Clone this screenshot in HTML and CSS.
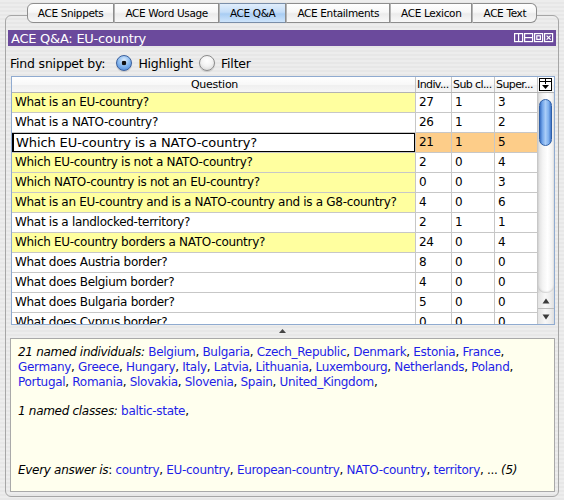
FILE: index.html
```html
<!DOCTYPE html>
<html>
<head>
<meta charset="utf-8">
<title>ACE Q&amp;A</title>
<link rel="stylesheet" href="styles.css">
</head>
<body>
<div class="window">
  <div class="tabs">
    <div class="tab first">ACE Snippets</div>
    <div class="tab">ACE Word Usage</div>
    <div class="tab active">ACE Q&amp;A</div>
    <div class="tab">ACE Entailments</div>
    <div class="tab">ACE Lexicon</div>
    <div class="tab last">ACE Text</div>
  </div>
  <div class="panel">
    <div class="titlebar">
      <span class="title">ACE Q&amp;A: EU-country</span>
      <svg class="ticons" width="40" height="10" viewBox="0 0 40 10">
        <g fill="none" stroke="#fff" stroke-width="1.2">
          <rect x="0.6" y="0.6" width="8" height="8"/><line x1="4.6" y1="1" x2="4.6" y2="8.4"/>
          <rect x="10.6" y="0.6" width="8" height="8"/><line x1="11" y1="4.6" x2="18.4" y2="4.6"/>
          <rect x="20.6" y="0.6" width="8" height="8"/><rect x="22.8" y="2.8" width="3.6" height="3.6"/>
          <rect x="30.6" y="0.6" width="8" height="8"/><path d="M32.6 2.6l4 4M36.6 2.6l-4 4"/>
        </g>
      </svg>
    </div>
    <div class="findrow">
      <span class="findlabel">Find snippet by:</span>
      <span class="radio on"></span><span class="rlabel">Highlight</span>
      <span class="radio"></span><span class="rlabel">Filter</span>
    </div>
    <div class="table">
      <div class="thead">
        <div class="th q">Question</div>
        <div class="th n1">Indiv...</div>
        <div class="th n2">Sub cl...</div>
        <div class="th n3">Super...</div>
        <div class="th corner">
          <svg width="13" height="13" viewBox="0 0 13 13">
            <rect x="0.5" y="0.5" width="12" height="12" fill="#fff" stroke="#000"/>
            <line x1="1" y1="3.5" x2="12" y2="3.5" stroke="#000"/>
            <line x1="6.5" y1="1" x2="6.5" y2="6" stroke="#000"/>
            <path d="M3 7h7l-3.5 4z" fill="#000"/>
          </svg>
        </div>
      </div>
      <div class="tbody">
        <div class="rows">
          <div class="row hl"><div class="td q">What is an EU-country?</div><div class="td n1">27</div><div class="td n2">1</div><div class="td n3">3</div></div>
          <div class="row"><div class="td q">What is a NATO-country?</div><div class="td n1">26</div><div class="td n2">1</div><div class="td n3">2</div></div>
          <div class="row sel"><div class="td q"><div class="editor">Which EU-country is a NATO-country?</div></div><div class="td n1">21</div><div class="td n2">1</div><div class="td n3">5</div></div>
          <div class="row hl"><div class="td q">Which EU-country is not a NATO-country?</div><div class="td n1">2</div><div class="td n2">0</div><div class="td n3">4</div></div>
          <div class="row hl"><div class="td q">Which NATO-country is not an EU-country?</div><div class="td n1">0</div><div class="td n2">0</div><div class="td n3">3</div></div>
          <div class="row hl"><div class="td q">What is an EU-country and is a NATO-country and is a G8-country?</div><div class="td n1">4</div><div class="td n2">0</div><div class="td n3">6</div></div>
          <div class="row"><div class="td q">What is a landlocked-territory?</div><div class="td n1">2</div><div class="td n2">1</div><div class="td n3">1</div></div>
          <div class="row hl"><div class="td q">Which EU-country borders a NATO-country?</div><div class="td n1">24</div><div class="td n2">0</div><div class="td n3">4</div></div>
          <div class="row"><div class="td q">What does Austria border?</div><div class="td n1">8</div><div class="td n2">0</div><div class="td n3">0</div></div>
          <div class="row"><div class="td q">What does Belgium border?</div><div class="td n1">4</div><div class="td n2">0</div><div class="td n3">0</div></div>
          <div class="row"><div class="td q">What does Bulgaria border?</div><div class="td n1">5</div><div class="td n2">0</div><div class="td n3">0</div></div>
          <div class="row"><div class="td q">What does Cyprus border?</div><div class="td n1">0</div><div class="td n2">0</div><div class="td n3">0</div></div>
        </div>
        <div class="vscroll">
          <div class="groove"><div class="thumb"></div></div>
          <div class="arrow up"><svg width="8" height="6" viewBox="0 0 8 6"><path d="M4 0.5L7.5 5.5H0.5z" fill="#3c3c3c"/></svg></div>
          <div class="arrow down"><svg width="8" height="6" viewBox="0 0 8 6"><path d="M4 5.5L7.5 0.5H0.5z" fill="#3c3c3c"/></svg></div>
        </div>
      </div>
    </div>
    <div class="divider"><svg width="7" height="4" viewBox="0 0 7 4"><path d="M3.5 0L7 4H0z" fill="#444"/></svg></div>
    <div class="info">
      <p class="p1"><i>21 named individuals:</i> <span class="lk">Belgium</span>, <span class="lk">Bulgaria</span>, <span class="lk">Czech_Republic</span>, <span class="lk">Denmark</span>, <span class="lk">Estonia</span>, <span class="lk">France</span>,<br><span class="lk">Germany</span>, <span class="lk">Greece</span>, <span class="lk">Hungary</span>, <span class="lk">Italy</span>, <span class="lk">Latvia</span>, <span class="lk">Lithuania</span>, <span class="lk">Luxembourg</span>, <span class="lk">Netherlands</span>, <span class="lk">Poland</span>,<br><span class="lk">Portugal</span>, <span class="lk">Romania</span>, <span class="lk">Slovakia</span>, <span class="lk">Slovenia</span>, <span class="lk">Spain</span>, <span class="lk">United_Kingdom</span>,</p>
      <p class="p2"><i>1 named classes:</i> <span class="lk">baltic-state</span>,</p>
      <p class="p3"><i>Every answer is</i>: <span class="lk">country</span>, <span class="lk">EU-country</span>, <span class="lk">European-country</span>, <span class="lk">NATO-country</span>, <span class="lk">territory</span>, ... <i>(5)</i></p>
    </div>
  </div>
</div>
</body>
</html>
```
FILE: styles.css
```css
* { box-sizing: border-box; }
html, body { margin: 0; padding: 0; }
body {
  width: 564px;
  height: 500px;
  overflow: hidden;
  font-family: "DejaVu Sans", sans-serif;
  color: #000;
  background: repeating-linear-gradient(to bottom, #ededed 0, #ededed 2px, #e7e7e7 2px, #e7e7e7 4px);
}
.window { padding-top: 3px; }

.tabs {
  display: flex;
  justify-content: center;
  position: relative;
  z-index: 1;
  height: 20px;
}
.tab {
  height: 20px;
  padding: 0 10px;
  display: flex;
  align-items: center;
  font-size: 10.5px;
  letter-spacing: -0.35px;
  white-space: nowrap;
  border: 1px solid #8d8d8d;
  border-left: 1px solid #b4b4b4;
  background: linear-gradient(#ffffff, #f7f7f7 45%, #ebebeb 55%, #f8f8f8);
}
.tab.first { border-left: 1px solid #8d8d8d; border-radius: 6px 0 0 6px; }
.tab.last { border-radius: 0 6px 6px 0; }
.tab.active {
  background: linear-gradient(#e1eefc, #c4ddf8 45%, #a9cdf3 55%, #cde4fb);
  border-top-color: #7a8ea8;
  border-bottom-color: #7a8ea8;
}

.panel {
  margin: -8px 5px 0;
  height: 482px;
  border: 1px solid #a6a6a6;
  border-radius: 6px;
  padding: 14px 0 4px;
  display: flex;
  flex-direction: column;
}

.titlebar {
  margin: 0 2px;
  height: 16px;
  flex: none;
  background: #6b4a9c;
  color: #fff;
  display: flex;
  align-items: center;
  justify-content: space-between;
  padding: 0 2px 0 3px;
}
.title { font-size: 13px; letter-spacing: -0.25px; }
.ticons { display: block; }

.findrow {
  margin: 8px 0 4px;
  height: 18px;
  flex: none;
  padding-left: 4px;
  display: flex;
  align-items: center;
  font-size: 12.5px;
  letter-spacing: -0.2px;
}
.findlabel { margin-right: 11px; }
.rlabel { margin: 0 6px 0 6px; }
.radio {
  width: 16px;
  height: 16px;
  border-radius: 50%;
  border: 1px solid #8b8b8b;
  background: radial-gradient(circle at 50% 35%, #ffffff 0, #f3f3f3 45%, #cfcfcf 100%);
  box-shadow: 0 1px 1px rgba(0,0,0,0.15);
}
.radio.on {
  border-color: #3a5f9c;
  background:
    radial-gradient(circle at 50% 50%, #101010 0, #101010 2px, transparent 2.6px),
    radial-gradient(circle at 50% 30%, #e0eefc 0, #8dbcf0 45%, #3f7fd6 100%);
}

.table {
  margin: 0 3px 0 5px;
  height: 249px;
  flex: none;
  border: 1px solid #90abd0;
  background: #fff;
  display: flex;
  flex-direction: column;
}
.thead {
  height: 16px;
  flex: none;
  display: flex;
  border-bottom: 1px solid #b3b3b3;
  background: linear-gradient(#ffffff, #f8f8f8 50%, #efefef 51%, #f6f6f6);
}
.th {
  font-size: 11px;
  letter-spacing: -0.25px;
  line-height: 15px;
  padding-left: 2px;
  white-space: nowrap;
  overflow: hidden;
  border-right: 1px solid #c4c4c4;
}
.th.n1, .th.n2, .th.n3 { letter-spacing: -0.6px; padding-left: 1px; }
.th.q { text-align: center; }
.q { flex: 1; min-width: 0; }
.n1 { width: 36px; flex: none; }
.n2 { width: 43px; flex: none; }
.n3 { width: 43px; flex: none; }
.th.corner {
  width: 16px;
  flex: none;
  border-right: none;
  padding: 1px 0 0 1px;
}
.th.corner svg { display: block; }

.tbody {
  flex: 1;
  display: flex;
  overflow: hidden;
}
.rows { flex: 1; min-width: 0; overflow: hidden; }
.row { display: flex; height: 20px; }
.td {
  height: 20px;
  font-size: 12px;
  letter-spacing: -0.3px;
  line-height: 19px;
  padding-left: 3px;
  white-space: nowrap;
  overflow: hidden;
  border-right: 1px solid #c7c7c7;
  border-bottom: 1px solid #c7c7c7;
}
.row.hl .td.q { background: #ffff9f; }
.row.sel .td.q { padding: 0; }
.row.sel .td.n1, .row.sel .td.n2, .row.sel .td.n3 { background: #fdcd89; }
.editor {
  height: 19px;
  border: 1px solid #000;
  border-width: 1px 1px 1px 2px;
  background: #fff;
  font-size: 13px;
  letter-spacing: -0.1px;
  line-height: 17px;
  padding-left: 2px;
}

.vscroll {
  width: 16px;
  flex: none;
  display: flex;
  flex-direction: column;
  background: linear-gradient(to right, #d6d6d6, #efefef 25%, #fbfbfb 55%, #ececec 85%, #dcdcdc);
}
.groove {
  flex: 1;
  padding: 6px 2px 0 1px;
  border-radius: 0 0 7px 7px;
  background: linear-gradient(to right, #dedede, #f4f4f4 30%, #ffffff 60%, #ededed);
  box-shadow: inset 0 -1px 2px rgba(0,0,0,0.18);
}
.thumb {
  height: 47px;
  border-radius: 7px;
  border: 1px solid #2f5fa6;
  background: linear-gradient(to right, #3b70c4, #73a6ea 22%, #aacdf8 50%, #7fb0ee 78%, #3f74c8);
}
.arrow {
  height: 15px;
  flex: none;
  display: flex;
  align-items: center;
  justify-content: center;
  background: linear-gradient(to right, #e2e2e2, #f8f8f8 45%, #ececec 80%, #dedede);
}
.arrow.up { border-bottom: 1px solid #bdbdbd; height: 16px; }
.arrow svg { display: block; }

.divider {
  height: 13px;
  flex: none;
  margin: 0 3px 0 4px;
  display: flex;
  align-items: center;
  justify-content: center;
  padding-bottom: 1px;
}
.divider svg { display: block; }

.info {
  flex: 1;
  margin: 0 3px 0 4px;
  border: 1px solid #a9a9a9;
  background: #ffffee;
  padding: 6px 7px;
  font-size: 12px;
  letter-spacing: -0.3px;
  line-height: 15px;
  white-space: nowrap;
}
.info p { margin: 0; }
.info .p2 { margin-top: 14px; }
.info .p3 { margin-top: 44px; }
.lk { color: #1e1ee8; }
```
